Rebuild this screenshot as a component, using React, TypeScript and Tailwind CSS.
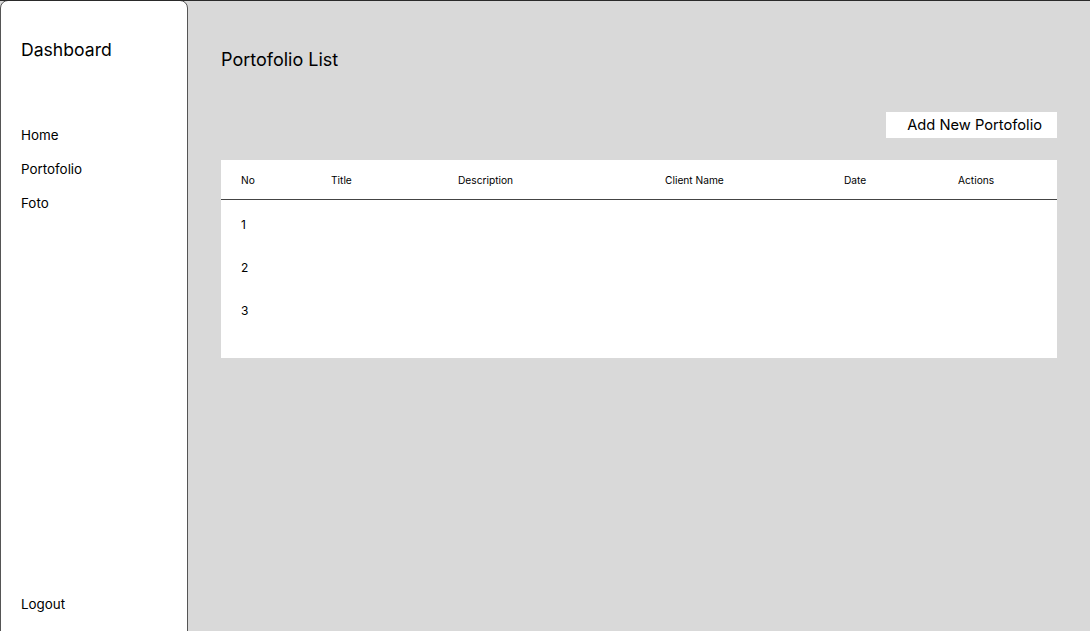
const columns = [
  { label: "No", w: "w-[90px]" },
  { label: "Title", w: "w-[127px]" },
  { label: "Description", w: "w-[207px]" },
  { label: "Client Name", w: "w-[179px]" },
  { label: "Date", w: "w-[114px]" },
  { label: "Actions", w: "flex-1" },
];

const App = () => {
  return (
    <div
      className="flex h-[631px] w-full overflow-hidden border-t border-[#2a2a2a] bg-[#d9d9d9] text-black"
      style={{ fontFamily: "Inter, 'Liberation Sans', sans-serif" }}
    >
      <aside className="flex h-[640px] w-[188px] shrink-0 flex-col rounded-lg border border-[#555] bg-white px-[20px] -mt-px">
        <h1 className="mt-[37px] text-[17.6px] leading-6">Dashboard</h1>
        <nav className="mt-[63px] flex flex-col gap-[14px] text-[13.4px] leading-5">
          <a href="#">Home</a>
          <a href="#">Portofolio</a>
          <a href="#">Foto</a>
        </nav>
        <a href="#" className="mt-auto mb-[25px] text-[13.4px] leading-5">
          Logout
        </a>
      </aside>

      <main className="flex-1 px-[33px]">
        <h2 className="mt-[47px] text-[18px] leading-6">Portofolio List</h2>
        <div className="mt-[40px] flex justify-end">
          <button className="h-[26px] w-[171px] bg-white pr-[15px] text-right text-[14.7px] leading-[26px]">
            Add New Portofolio
          </button>
        </div>
        <div className="mt-[22px] h-[198px] bg-white">
          <div className="flex h-[40px] items-center border-b border-[#444] pl-[20px] pt-[3px] text-[10.2px]">
            {columns.map((c) => (
              <div key={c.label} className={c.w}>
                {c.label}
              </div>
            ))}
          </div>
          <div className="flex flex-col pl-[20px] pt-[17px] text-[12px] leading-4">
            {[1, 2, 3].map((n) => (
              <div key={n} className="h-[43px]">
                {n}
              </div>
            ))}
          </div>
        </div>
      </main>
    </div>
  );
};

export default App;
